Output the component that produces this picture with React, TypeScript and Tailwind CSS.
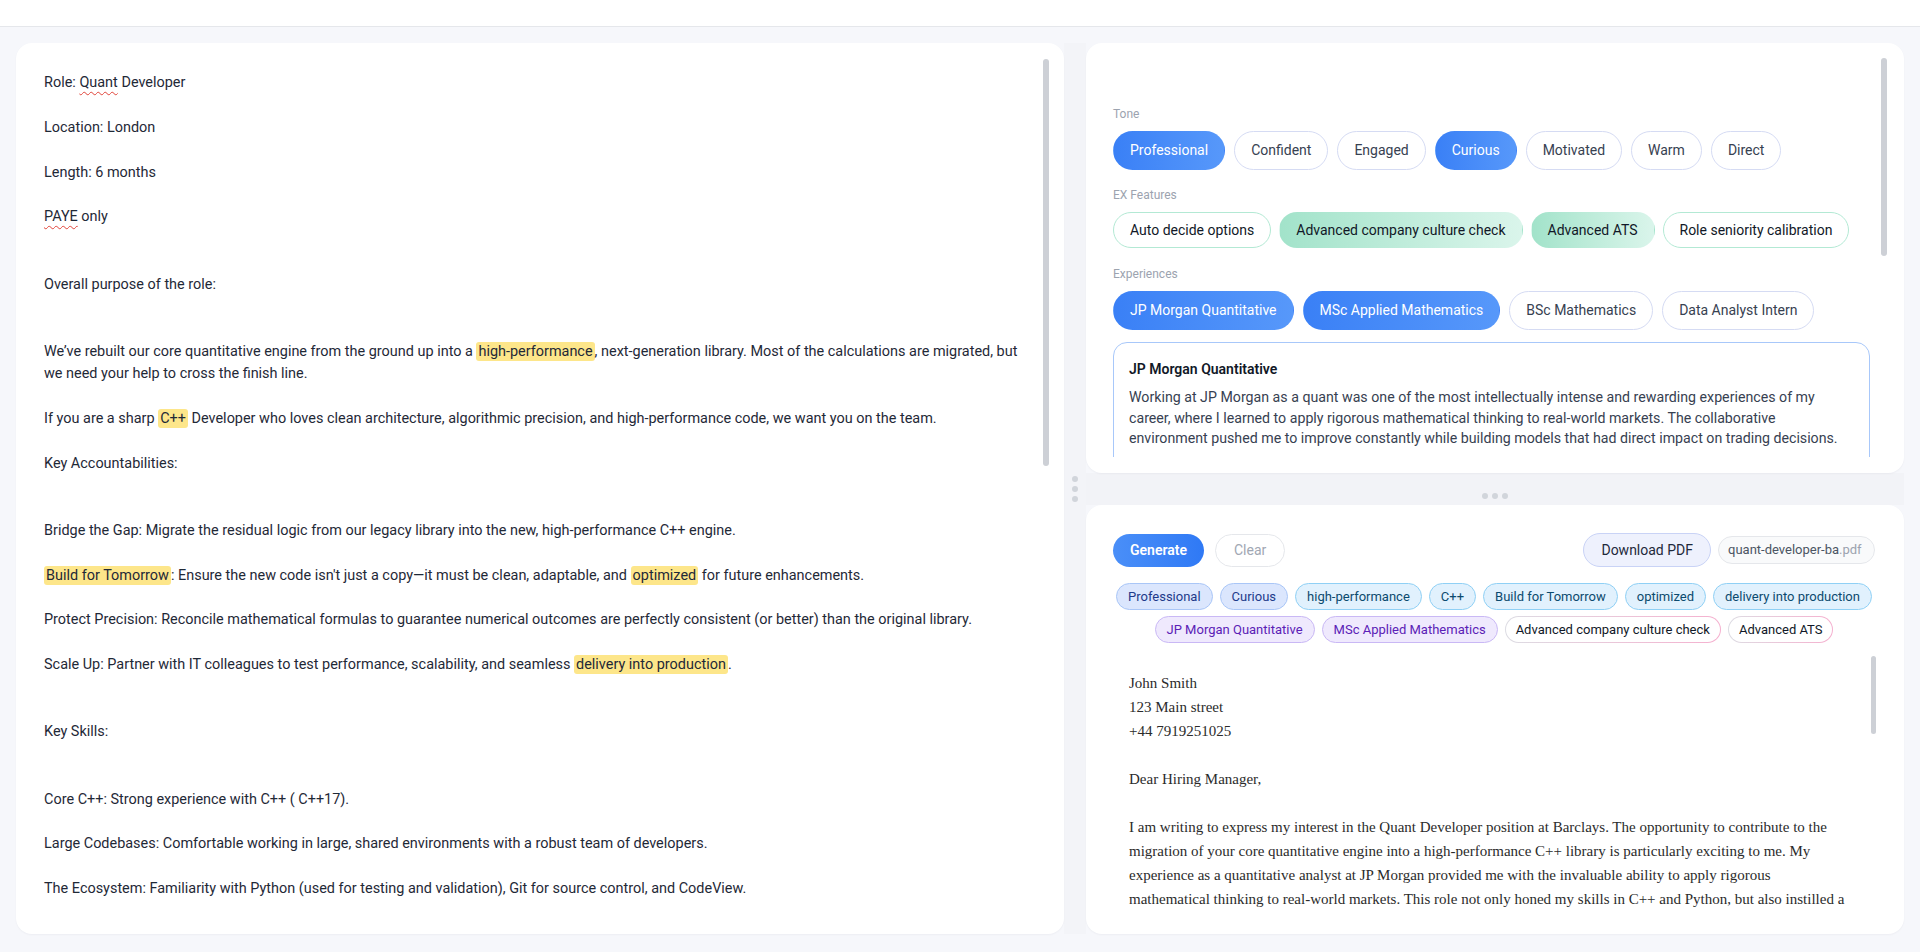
import React from "react";

const Hl = ({ children }: { children: React.ReactNode }) => (
  <span className="bg-[#fde68a] rounded-[3px] px-[2px] py-[1px]">{children}</span>
);
const Sq = ({ children }: { children: React.ReactNode }) => (
  <span className="underline decoration-wavy decoration-[#e0443a] decoration-1 underline-offset-[4px]">
    {children}
  </span>
);

const leftLines: (React.ReactNode | null)[] = [
  <>
    Role: <Sq>Quant</Sq> Developer
  </>,
  null,
  "Location: London",
  null,
  "Length: 6 months",
  null,
  <>
    <Sq>PAYE</Sq> only
  </>,
  null,
  null,
  "Overall purpose of the role:",
  null,
  null,
  <>
    We’ve rebuilt our core quantitative engine from the ground up into a <Hl>high-performance</Hl>, next-generation
    library. Most of the calculations are migrated, but
  </>,
  "we need your help to cross the finish line.",
  null,
  <>
    If you are a sharp <Hl>C++</Hl> Developer who loves clean architecture, algorithmic precision, and
    high-performance code, we want you on the team.
  </>,
  null,
  "Key Accountabilities:",
  null,
  null,
  "Bridge the Gap: Migrate the residual logic from our legacy library into the new, high-performance C++ engine.",
  null,
  <>
    <Hl>Build for Tomorrow</Hl>: Ensure the new code isn't just a copy—it must be clean, adaptable, and{" "}
    <Hl>optimized</Hl> for future enhancements.
  </>,
  null,
  "Protect Precision: Reconcile mathematical formulas to guarantee numerical outcomes are perfectly consistent (or better) than the original library.",
  null,
  <>
    Scale Up: Partner with IT colleagues to test performance, scalability, and seamless{" "}
    <Hl>delivery into production</Hl>.
  </>,
  null,
  null,
  "Key Skills:",
  null,
  null,
  "Core C++: Strong experience with C++ ( C++17).",
  null,
  "Large Codebases: Comfortable working in large, shared environments with a robust team of developers.",
  null,
  "The Ecosystem: Familiarity with Python (used for testing and validation), Git for source control, and CodeView.",
];

const Label = ({ children }: { children: React.ReactNode }) => (
  <div className="text-[12px] leading-[16px] text-[#9ca3af]">{children}</div>
);

const BluePill = ({ label, on }: { label: string; on: boolean }) => (
  <div
    className={
      on
        ? "h-[39px] px-4 flex items-center rounded-full border border-transparent bg-linear-to-r from-[#3a80f6] to-[#5798fa] text-white text-[14px] whitespace-nowrap"
        : "h-[39px] px-4 flex items-center rounded-full border border-[#d5dbf3] bg-white text-[#374151] text-[14px] whitespace-nowrap"
    }
  >
    {label}
  </div>
);

const MintPill = ({ label, on }: { label: string; on: boolean }) => (
  <div
    className={
      on
        ? "h-[36px] px-4 flex items-center rounded-full border border-transparent bg-linear-to-r from-[#a2e3ca] to-[#daf5eb] text-[#111827] text-[14px] whitespace-nowrap"
        : "h-[36px] px-4 flex items-center rounded-full border border-[#b3e9d4] bg-white text-[#111827] text-[14px] whitespace-nowrap"
    }
  >
    {label}
  </div>
);

type ChipKind = "tone" | "kw" | "exp" | "feat";
const Chip = ({ label, kind }: { label: string; kind: ChipKind }) => {
  if (kind === "feat") {
    return (
      <div className="rounded-full p-[1px] bg-linear-to-r from-[#dcdce3] to-[#f5b0cf]">
        <div className="h-[25px] px-[10px] flex items-center rounded-full bg-white text-[13px] text-[#111827] whitespace-nowrap">
          {label}
        </div>
      </div>
    );
  }
  const cls =
    kind === "tone"
      ? "bg-[#dbe6fd] border-[#a9c6f7] text-[#1e3a8a]"
      : kind === "kw"
      ? "bg-[#e1f1fd] border-[#8fd0f5] text-[#0c4a6e]"
      : "bg-[#efe9fd] border-[#c9b8f5] text-[#5b21b6]";
  return (
    <div
      className={
        "h-[27px] px-[11px] flex items-center rounded-full border text-[13px] whitespace-nowrap " + cls
      }
    >
      {label}
    </div>
  );
};

const letterLines: (string | null)[] = [
  "John Smith",
  "123 Main street",
  "+44 7919251025",
  null,
  "Dear Hiring Manager,",
  null,
  "I am writing to express my interest in the Quant Developer position at Barclays. The opportunity to contribute to the",
  "migration of your core quantitative engine into a high-performance C++ library is particularly exciting to me. My",
  "experience as a quantitative analyst at JP Morgan provided me with the invaluable ability to apply rigorous",
  "mathematical thinking to real-world markets. This role not only honed my skills in C++ and Python, but also instilled a",
];

export default function App() {
  return (
    <div className="w-[1920px] h-[952px] flex flex-col bg-[#f6f7fb] font-[Roboto,sans-serif] overflow-hidden">
      <div className="h-[27px] shrink-0 bg-white border-b border-[#e5e7eb]" />
      <div className="flex-1 flex px-4 pt-4 pb-[18px] min-h-0">
        {/* Left job description card */}
        <div className="relative w-[1048px] shrink-0 rounded-[16px] bg-white overflow-hidden shadow-[0_1px_2px_rgba(16,24,40,0.04)]">
          <div className="pl-[28px] pt-[29px] text-[14.45px] leading-[22.4px] text-[#1f2937]">
            {leftLines.map((l, i) => (
              <div key={i} className="h-[22.4px] whitespace-nowrap">
                {l}
              </div>
            ))}
          </div>
          <div className="absolute right-[15px] top-[16px] w-[6px] h-[407px] rounded-full bg-[#cdd0d6]" />
        </div>

        {/* Vertical splitter */}
        <div className="w-[22px] shrink-0 flex flex-col items-center justify-center gap-[4px] bg-[#f3f4f8]">
          <div className="w-[6px] h-[6px] rounded-full bg-[#d1d5db]" />
          <div className="w-[6px] h-[6px] rounded-full bg-[#d1d5db]" />
          <div className="w-[6px] h-[6px] rounded-full bg-[#d1d5db]" />
        </div>

        {/* Right column */}
        <div className="flex-1 flex flex-col min-w-0">
          {/* Options card */}
          <div className="relative h-[430px] shrink-0 rounded-[16px] bg-white overflow-hidden pb-4 flex flex-col shadow-[0_1px_2px_rgba(16,24,40,0.04)]">
            <div className="flex-1 min-h-0 overflow-hidden pt-[63px] pl-[27px] pr-[34px]">
              <Label>Tone</Label>
              <div className="mt-[9px] flex gap-[9px]">
                <BluePill label="Professional" on />
                <BluePill label="Confident" on={false} />
                <BluePill label="Engaged" on={false} />
                <BluePill label="Curious" on />
                <BluePill label="Motivated" on={false} />
                <BluePill label="Warm" on={false} />
                <BluePill label="Direct" on={false} />
              </div>
              <div className="mt-[17px]">
                <Label>EX Features</Label>
              </div>
              <div className="mt-[9px] flex gap-[8px]">
                <MintPill label="Auto decide options" on={false} />
                <MintPill label="Advanced company culture check" on />
                <MintPill label="Advanced ATS" on />
                <MintPill label="Role seniority calibration" on={false} />
              </div>
              <div className="mt-[18px]">
                <Label>Experiences</Label>
              </div>
              <div className="mt-[9px] flex gap-[9px]">
                <BluePill label="JP Morgan Quantitative" on />
                <BluePill label="MSc Applied Mathematics" on />
                <BluePill label="BSc Mathematics" on={false} />
                <BluePill label="Data Analyst Intern" on={false} />
              </div>
              <div className="mt-[12px] w-[757px] h-[150px] rounded-[14px] border border-[#a8c8fa] px-[15px] pt-[16px]">
                <div className="text-[14px] leading-[20px] font-semibold text-[#111827]">JP Morgan Quantitative</div>
                <div className="mt-[8px] text-[14.2px] leading-[20.5px] text-[#374151]">
                  <div className="whitespace-nowrap">
                    Working at JP Morgan as a quant was one of the most intellectually intense and rewarding experiences of my
                  </div>
                  <div className="whitespace-nowrap">
                    career, where I learned to apply rigorous mathematical thinking to real-world markets. The collaborative
                  </div>
                  <div className="whitespace-nowrap">
                    environment pushed me to improve constantly while building models that had direct impact on trading decisions.
                  </div>
                </div>
              </div>
            </div>
            <div className="absolute right-[17px] top-[15px] w-[6px] h-[198px] rounded-full bg-[#cdd0d6]" />
          </div>

          {/* Horizontal splitter */}
          <div className="h-[32px] shrink-0 flex justify-center items-start pt-[20px] gap-[4px] bg-[#f2f3f7]">
            <div className="w-[6px] h-[6px] rounded-full bg-[#d1d5db]" />
            <div className="w-[6px] h-[6px] rounded-full bg-[#d1d5db]" />
            <div className="w-[6px] h-[6px] rounded-full bg-[#d1d5db]" />
          </div>

          {/* Output card */}
          <div className="relative flex-1 min-h-0 rounded-[16px] bg-white overflow-hidden pt-[28px] pl-[27px] pr-[29px] shadow-[0_1px_2px_rgba(16,24,40,0.04)]">
            <div className="h-[34px] flex items-center">
              <div className="h-[33px] px-[17px] flex items-center rounded-full bg-linear-to-r from-[#4a8ff8] to-[#2f79f5] text-white text-[14px] font-semibold">
                Generate
              </div>
              <div className="ml-[11px] h-[33px] px-[18px] flex items-center rounded-full border border-[#e5e7eb] bg-white text-[#a1a7b3] text-[14px]">
                Clear
              </div>
              <div className="flex-1" />
              <div className="h-[34px] px-[17px] flex items-center rounded-full border border-[#c9d3f6] bg-[#eef1fd] text-[#1e293b] text-[14px]">
                Download PDF
              </div>
              <div className="ml-[7px] h-[28px] w-[157px] px-[9px] flex items-center rounded-full border border-[#e5e7eb] bg-[#f9fafb] text-[13px] whitespace-nowrap overflow-hidden">
                <span className="text-[#4b5563]">quant-developer-ba</span>
                <span className="text-[#9ca3af]">.pdf</span>
              </div>
            </div>
            <div className="mt-[16px] flex flex-wrap justify-center gap-x-[7px] gap-y-[6px] px-[2px]">
              <Chip label="Professional" kind="tone" />
              <Chip label="Curious" kind="tone" />
              <Chip label="high-performance" kind="kw" />
              <Chip label="C++" kind="kw" />
              <Chip label="Build for Tomorrow" kind="kw" />
              <Chip label="optimized" kind="kw" />
              <Chip label="delivery into production" kind="kw" />
              <Chip label="JP Morgan Quantitative" kind="exp" />
              <Chip label="MSc Applied Mathematics" kind="exp" />
              <Chip label="Advanced company culture check" kind="feat" />
              <Chip label="Advanced ATS" kind="feat" />
            </div>
            <div className="mt-[13px] h-[252px] overflow-hidden pl-[16px] pt-[15px] font-['Liberation_Serif',serif] text-[15px] leading-[24px] text-[#2b2b2b]">
              {letterLines.map((l, i) => (
                <div key={i} className="h-[24px] whitespace-nowrap">
                  {l}
                </div>
              ))}
            </div>
            <div className="absolute right-[28px] top-[151px] w-[5px] h-[78px] rounded-full bg-[#cdd0d6]" />
          </div>
        </div>
      </div>
    </div>
  );
}
